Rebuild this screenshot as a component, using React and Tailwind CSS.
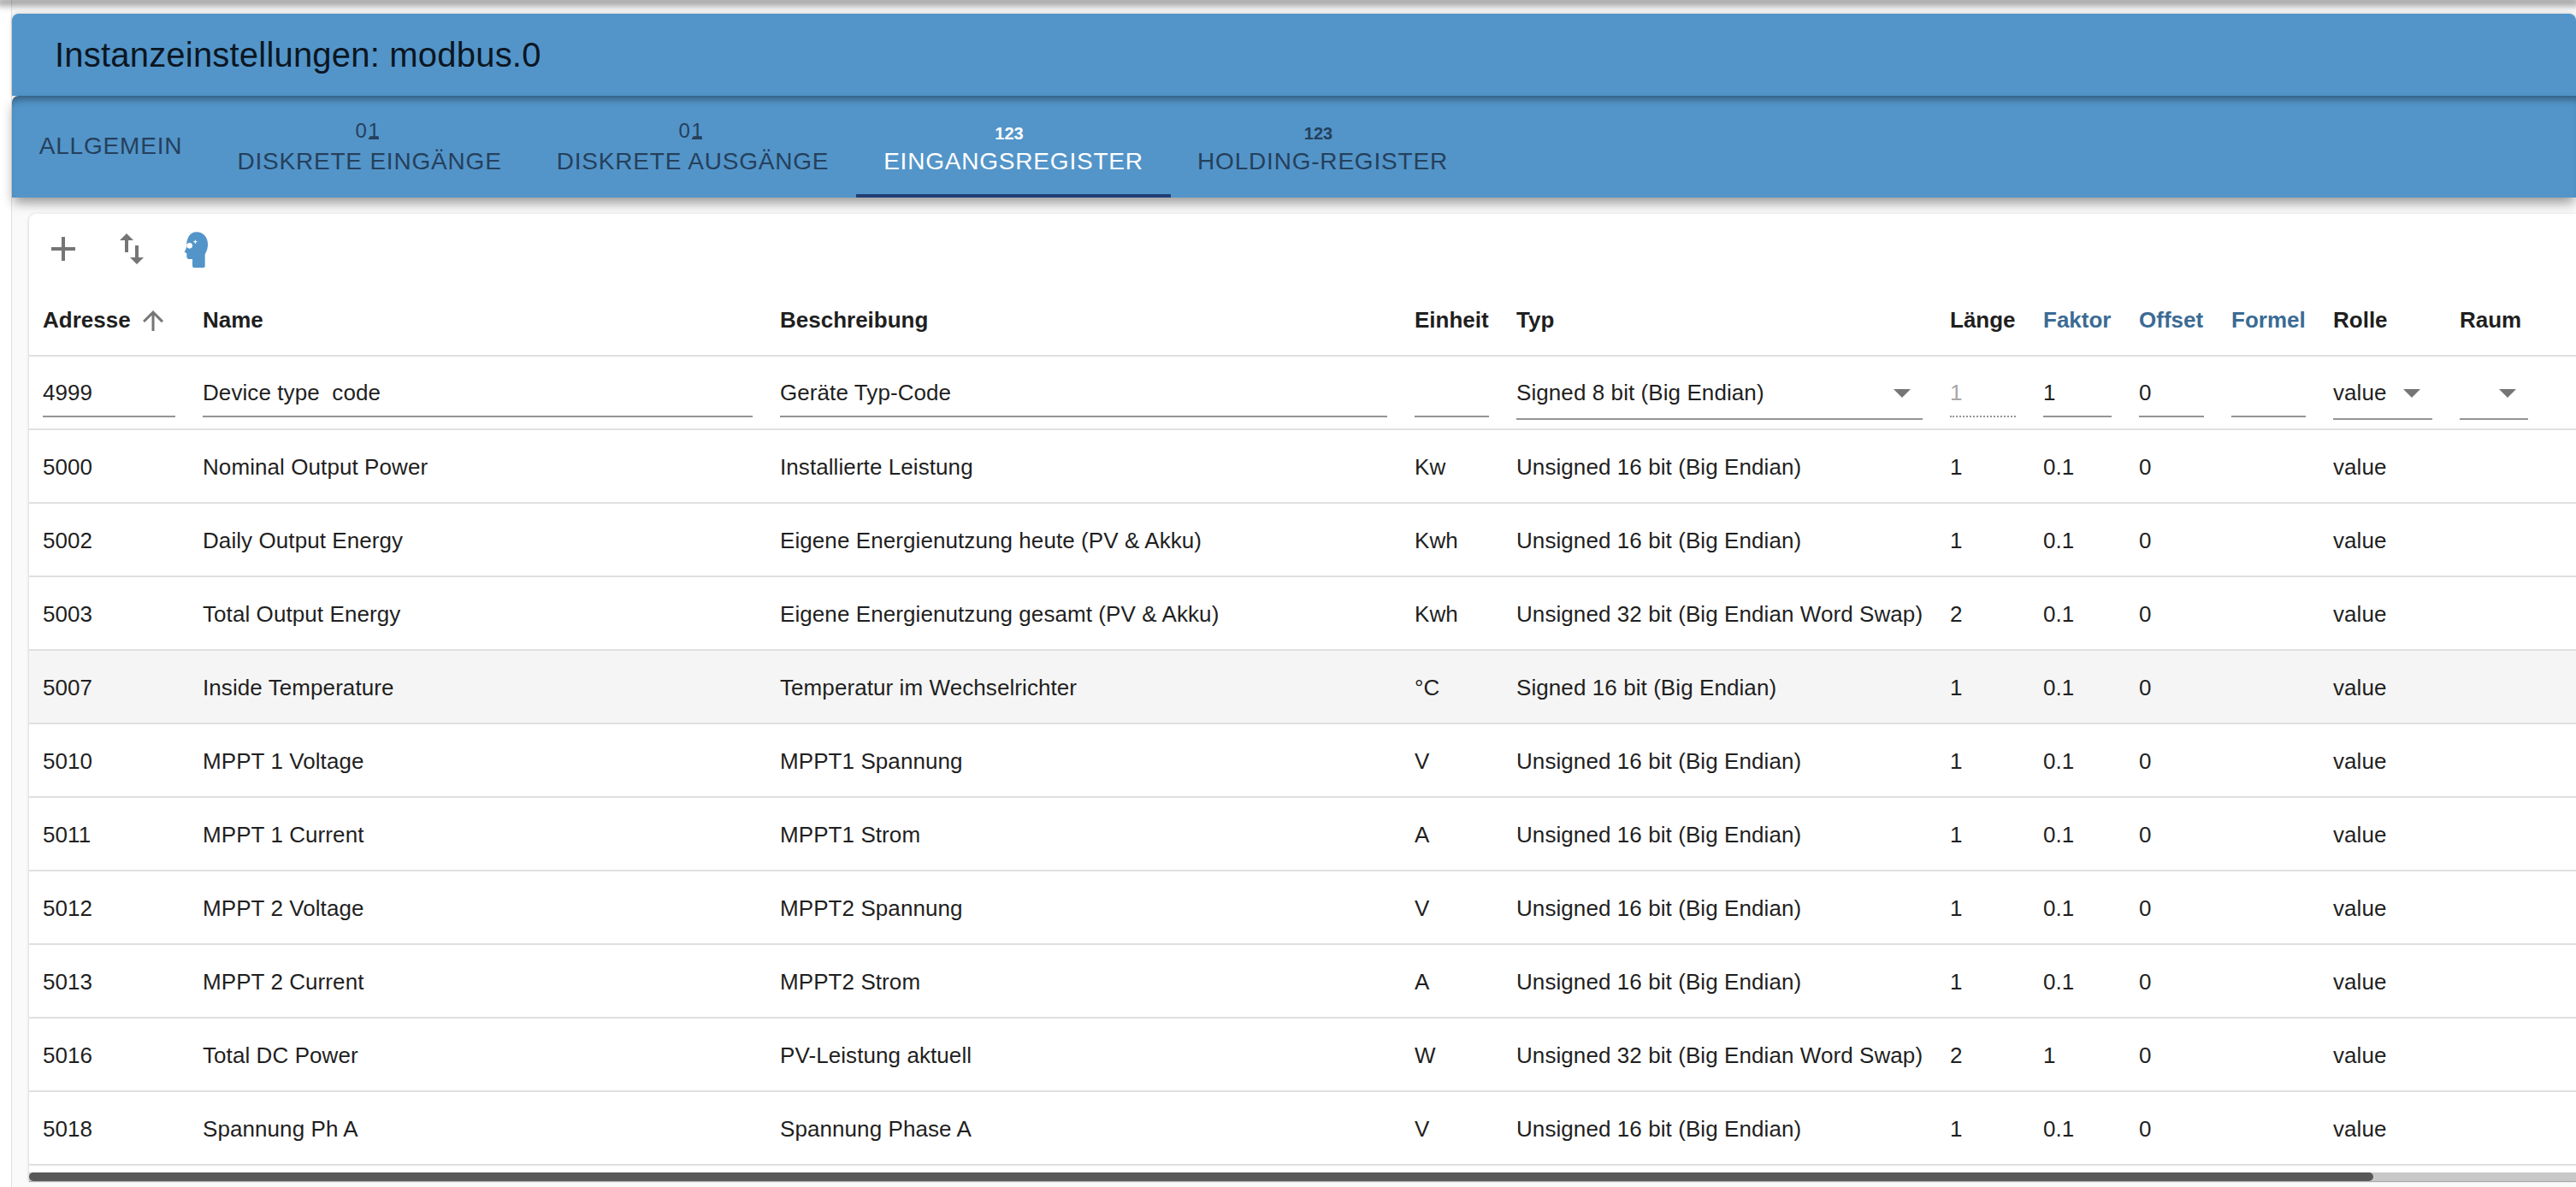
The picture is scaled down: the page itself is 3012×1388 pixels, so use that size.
const tabs = [
  { label: 'ALLGEMEIN', width: 'w-[231px]' },
  { label: 'DISKRETE EINGÄNGE', icon: 'bit', width: 'w-[374px]' },
  { label: 'DISKRETE AUSGÄNGE', icon: 'bit', width: 'w-[382px]' },
  { label: 'EINGANGSREGISTER', icon: 'num', width: 'w-[368px]', active: true },
  { label: 'HOLDING-REGISTER', icon: 'num', width: 'w-[355px]' },
];

const columns = [
  { label: 'Adresse', width: 'w-[187px]' },
  { label: 'Name', width: 'w-[675px]' },
  { label: 'Beschreibung', width: 'w-[742px]' },
  { label: 'Einheit', width: 'w-[119px]' },
  { label: 'Typ', width: 'w-[507px]' },
  { label: 'Länge', width: 'w-[109px]' },
  { label: 'Faktor', width: 'w-[112px]', accent: true },
  { label: 'Offset', width: 'w-[108px]', accent: true },
  { label: 'Formel', width: 'w-[119px]', accent: true },
  { label: 'Rolle', width: 'w-[148px]' },
  { label: 'Raum', width: 'w-[112px]' },
  { label: '', width: 'w-[40px]' },
];

const U16 = 'Unsigned 16 bit (Big Endian)';
const U32 = 'Unsigned 32 bit (Big Endian Word Swap)';

const rows = [
  ['5000', 'Nominal Output Power', 'Installierte Leistung', 'Kw', U16, '1', '0.1'],
  ['5002', 'Daily Output Energy', 'Eigene Energienutzung heute (PV & Akku)', 'Kwh', U16, '1', '0.1'],
  ['5003', 'Total Output Energy', 'Eigene Energienutzung gesamt (PV & Akku)', 'Kwh', U32, '2', '0.1'],
  ['5007', 'Inside Temperature', 'Temperatur im Wechselrichter', '°C', 'Signed 16 bit (Big Endian)', '1', '0.1'],
  ['5010', 'MPPT 1 Voltage', 'MPPT1 Spannung', 'V', U16, '1', '0.1'],
  ['5011', 'MPPT 1 Current', 'MPPT1 Strom', 'A', U16, '1', '0.1'],
  ['5012', 'MPPT 2 Voltage', 'MPPT2 Spannung', 'V', U16, '1', '0.1'],
  ['5013', 'MPPT 2 Current', 'MPPT2 Strom', 'A', U16, '1', '0.1'],
  ['5016', 'Total DC Power', 'PV-Leistung aktuell', 'W', U32, '2', '1'],
  ['5018', 'Spannung Ph A', 'Spannung Phase A', 'V', U16, '1', '0.1'],
];

function TextField({ value = '', disabled = false }) {
  return (
    <input
      readOnly
      value={value}
      className={`block w-full h-[44px] pb-[12px] bg-transparent outline-none tracking-[0.08px] border-b-2 ${
        disabled ? 'border-dotted border-[#949494] text-[#a8a8a8]' : 'border-[#949494] text-[#1f1f1f]'
      }`}
    />
  );
}

function SelectField({ value = '' }) {
  return (
    <div className="flex items-start justify-between h-[47px] pr-[14px] border-b-2 border-[#949494]">
      <span className="whitespace-nowrap leading-[30px] tracking-[0.08px]">{value}</span>
      <svg viewBox="7 10 10 5" className="w-[20px] h-[10px] mt-[11px] fill-[#757575] shrink-0">
        <path d="M7 10l5 5 5-5z" />
      </svg>
    </div>
  );
}

function TabIcon({ kind }) {
  if (kind === 'bit') {
    return (
      <span className="flex items-start h-[30px] pt-[6px] mb-[2px] -ml-[6px] text-[24px] leading-[16px] tracking-normal">
        <span className="h-[18px] w-[15px] border-b-2 border-transparent">0</span>
        <span className="h-[18px] w-[12px] border-b-2 border-current">1</span>
      </span>
    );
  }
  return (
    <span className="block h-[30px] pt-[9px] mb-[2px] -ml-[10px] text-[20px] leading-[16px] font-bold tracking-normal">
      123
    </span>
  );
}

function HeadIcon() {
  return (
    <svg viewBox="0 0 180 168" className="ml-[-11px] w-[60px] h-[56px]">
      <path
        fill="#5395c9"
        d="M92 25C115 25 132 42 132 68C132 85 126 95 122 103L122 145Q122 150 117 150L84 150Q78 150 78 144L78 120L64 120Q58 120 58 112L58 100L50 95L57 80C56 45 70 25 92 25Z"
      />
      <circle cx="68" cy="73" r="10" fill="#fff" />
      <path d="M50 67l10 3" stroke="#fff" strokeWidth="3" />
      <path d="M82 59h12M88 53v12" stroke="#fff" strokeWidth="3.500" />
    </svg>
  );
}

export default function App() {
  return (
    <div className="relative w-[3012px] h-[1388px] overflow-hidden bg-white font-['Liberation_Sans',sans-serif]">
      {/* top shadow of the app bar */}
      <div className="relative z-10 h-0 shadow-[0_2px_8px_4px_rgba(0,0,0,0.45)]" />

      <div className="ml-[13px] pt-[16px] h-full border-l border-[#e0e0e0] bg-[#fafafa]">
        <div className="h-[96px] flex items-center pl-[50px] rounded-t-[8px] bg-[#5395c9] text-[#0c1622] text-[40px] tracking-[0.2px] shadow-[0_0_5px_rgba(0,0,0,0.2)]">
          Instanzeinstellungen: modbus.0
        </div>

        <div className="relative flex h-[119px] rounded-tl-[8px] bg-[#5395c9] shadow-[0_8px_14px_-2px_rgba(0,0,0,0.4),inset_0_10px_10px_-6px_rgba(0,0,0,0.4)]">
          {tabs.map(tab => (
            <div
              key={tab.label}
              className={`flex flex-col items-center justify-center shrink-0 text-[28px] leading-[36px] tracking-[0.8px] border-b-4 ${tab.width} ${
                tab.icon ? 'pt-[7px]' : 'pt-[3px]'
              } ${tab.active ? 'text-white border-[#1f3f75]' : 'text-[#25405c] border-transparent'}`}
            >
              {tab.icon && <TabIcon kind={tab.icon} />}
              <span>{tab.label}</span>
            </div>
          ))}
        </div>

        <div className="mt-[19px] ml-[20px] rounded-tl-[8px] bg-white shadow-[-1px_0_3px_rgba(0,0,0,0.12)] text-[26px] text-[#1f1f1f]">
          {/* toolbar */}
          <div className="flex items-center h-[82px] pl-[16px] gap-[32px]">
            <svg viewBox="0 0 24 24" className="w-[48px] h-[48px] fill-[#757575]">
              <path d="M19 13h-6v6h-2v-6H5v-2h6V5h2v6h6v2z" />
            </svg>
            <svg viewBox="0 0 24 24" className="w-[48px] h-[48px] fill-[#757575]">
              <path d="M9 3 5 6.99h3V14h2V6.99h3L9 3zm7 14.01V10h-2v7.01h-3L15 21l4-3.99h-3z" />
            </svg>
            <HeadIcon />
          </div>

          {/* table */}
          <table className="table-fixed w-[2978px]">
            <thead>
              <tr className="h-[84px] border-b-2 border-[#e0e0e0]">
                {columns.map(col => (
                  <th
                    key={col.label || 'rest'}
                    className={`${col.width} px-[16px] pt-[2px] text-left font-bold whitespace-nowrap ${
                      col.accent ? 'text-[#3b6b94]' : 'text-[#1f1f1f]'
                    }`}
                  >
                    <span className="flex items-center gap-[14px]">
                      {col.label}
                      {col.label === 'Adresse' && (
                        <svg viewBox="0 0 24 24" className="w-[36px] h-[36px] -ml-[6px] fill-[#757575]">
                          <path d="M4 12l1.41 1.41L11 7.83V20h2V7.83l5.58 5.59L20 12l-8-8-8 8z" />
                        </svg>
                      )}
                    </span>
                  </th>
                ))}
              </tr>
            </thead>
            <tbody>
              <tr className="h-[86px] border-b-2 border-[#e0e0e0]">
                <td className="px-[16px] pt-[27px] align-top"><TextField value="4999" /></td>
                <td className="px-[16px] pt-[27px] align-top"><TextField value="Device type  code" /></td>
                <td className="px-[16px] pt-[27px] align-top"><TextField value="Geräte Typ-Code" /></td>
                <td className="px-[16px] pt-[27px] align-top"><TextField /></td>
                <td className="px-[16px] pt-[27px] align-top"><SelectField value="Signed 8 bit (Big Endian)" /></td>
                <td className="px-[16px] pt-[27px] align-top"><TextField value="1" disabled /></td>
                <td className="px-[16px] pt-[27px] align-top"><TextField value="1" /></td>
                <td className="px-[16px] pt-[27px] align-top"><TextField value="0" /></td>
                <td className="px-[16px] pt-[27px] align-top"><TextField /></td>
                <td className="px-[16px] pt-[27px] align-top"><SelectField value="value" /></td>
                <td className="px-[16px] pt-[27px] align-top"><SelectField /></td>
                <td />
              </tr>
              {rows.map(row => (
                <tr
                  key={row[0]}
                  className={`h-[86px] border-b-2 border-[#e0e0e0] tracking-[0.08px] ${row[0] === '5007' ? 'bg-[#f5f5f5]' : ''}`}
                >
                  {row.map((cell, i) => (
                    <td key={i} className="px-[16px] pt-[2px] whitespace-nowrap">{cell}</td>
                  ))}
                  <td className="px-[16px] pt-[2px]">0</td>
                  <td />
                  <td className="px-[16px] pt-[2px]">value</td>
                  <td />
                  <td />
                </tr>
              ))}
            </tbody>
          </table>

          {/* horizontal scrollbar */}
          <div className="mt-[8px] h-[10px] bg-[#c8c8c8] shadow-[0_1px_1px_rgba(0,0,0,0.3)]">
            <div className="w-[2741px] h-full rounded-[5px] bg-[#585858]" />
          </div>
        </div>
      </div>
    </div>
  );
}
